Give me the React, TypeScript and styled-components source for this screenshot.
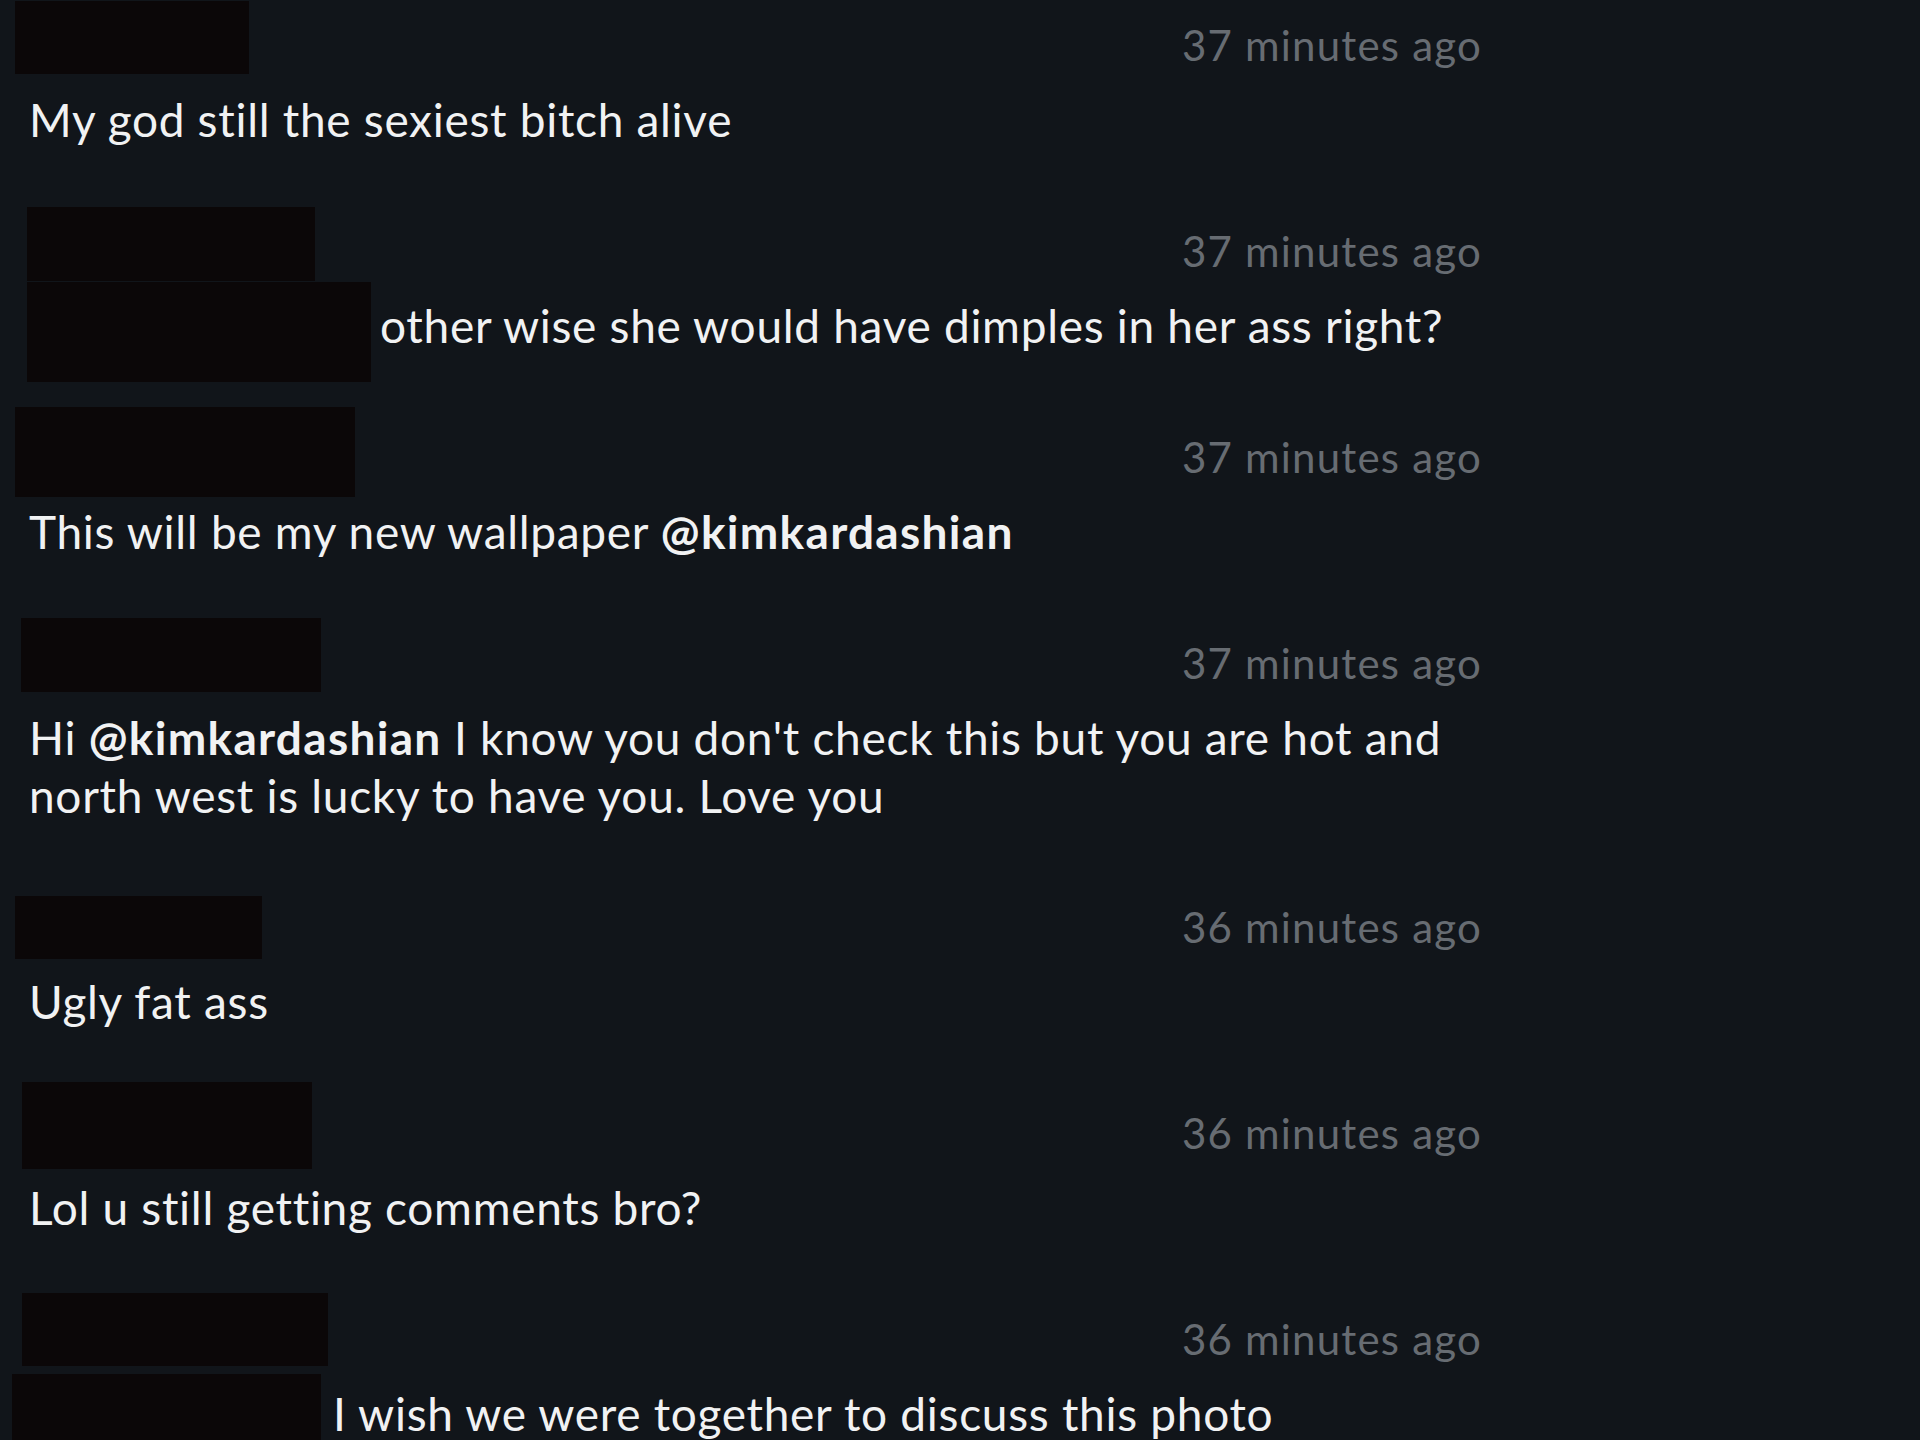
import React from 'react'
import styled, { createGlobalStyle } from 'styled-components'

const Global = createGlobalStyle`
  html, body {
    margin: 0;
    background: #11151a;
    overflow: hidden;
  }
`

const Feed = styled.div`
  width: 1453px;
  padding: 15px 0 0 29px;
  font-family: Lato, "Open Sans", sans-serif;
  -webkit-font-smoothing: antialiased;
`

const Comment = styled.div`
  padding-bottom: 72px;
`

const Header = styled.div`
  display: flex;
  align-items: center;
  justify-content: space-between;
  height: 60px;
`

const Redaction = styled.div<{ $w: number; $h: number; $x: number; $dy: number }>`
  flex: none;
  width: ${p => p.$w}px;
  height: ${p => p.$h}px;
  margin-left: ${p => p.$x}px;
  transform: translateY(${p => p.$dy}px);
  background: #0b0708;
`

const Time = styled.span`
  font-size: 42px;
  color: #676c72;
  letter-spacing: 1.2px;
`

const Body = styled.div`
  margin-top: 16px;
  font-size: 46px;
  line-height: 58px;
  color: #f1f2f3;
  letter-spacing: 0.7px;
`

const BodyRow = styled(Body)`
  display: flex;
  align-items: center;
  height: 58px;
  white-space: nowrap;
`

const Mention = styled.b`
  font-weight: 700;
  letter-spacing: 1.3px;
`

type Box = { w: number; h: number; x: number; dy: number; gap?: number }

type Item = {
  time: string
  name: Box
  lead?: Box
  text: React.ReactNode
}

const comments: Item[] = [
  {
    time: '37 minutes ago',
    name: { w: 234, h: 73, x: -14, dy: -8 },
    text: 'My god still the sexiest bitch alive',
  },
  {
    time: '37 minutes ago',
    name: { w: 288, h: 74, x: -2, dy: -7 },
    lead: { w: 344, h: 100, x: -2, dy: 6, gap: 9 },
    text: 'other wise she would have dimples in her ass right?',
  },
  {
    time: '37 minutes ago',
    name: { w: 340, h: 90, x: -14, dy: -5 },
    text: (
      <>
        This will be my new wallpaper <Mention>@kimkardashian</Mention>
      </>
    ),
  },
  {
    time: '37 minutes ago',
    name: { w: 300, h: 74, x: -8, dy: -8 },
    text: (
      <>
        Hi <Mention>@kimkardashian</Mention> I know you don't check this but you are hot and
        north west is lucky to have you. Love you
      </>
    ),
  },
  {
    time: '36 minutes ago',
    name: { w: 247, h: 63, x: -14, dy: 0 },
    text: 'Ugly fat ass',
  },
  {
    time: '36 minutes ago',
    name: { w: 290, h: 87, x: -7, dy: -8 },
    text: 'Lol u still getting comments bro?',
  },
  {
    time: '36 minutes ago',
    name: { w: 306, h: 73, x: -7, dy: -10 },
    lead: { w: 309, h: 82, x: -17, dy: 1, gap: 12 },
    text: 'I wish we were together to discuss this photo',
  },
]

export default function App() {
  return (
    <Feed>
      <Global />
      {comments.map((c, i) => (
        <Comment key={i}>
          <Header>
            <Redaction $w={c.name.w} $h={c.name.h} $x={c.name.x} $dy={c.name.dy} />
            <Time>{c.time}</Time>
          </Header>
          {c.lead ? (
            <BodyRow>
              <Redaction $w={c.lead.w} $h={c.lead.h} $x={c.lead.x} $dy={c.lead.dy} />
              <span style={{ marginLeft: c.lead.gap }}>{c.text}</span>
            </BodyRow>
          ) : (
            <Body>{c.text}</Body>
          )}
        </Comment>
      ))}
    </Feed>
  )
}
